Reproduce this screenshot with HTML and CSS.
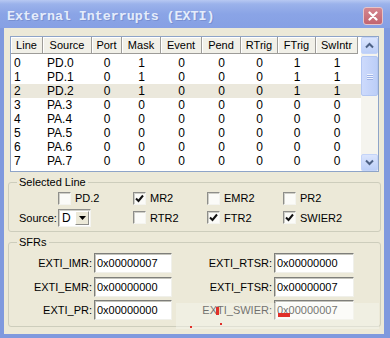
FILE: index.html
```html
<!DOCTYPE html>
<html lang="en">
<head>
    <meta charset="UTF-8">
    <title>External Interrupts (EXTI)</title>
    <link rel="stylesheet" href="styles.css">
</head>
<body>
    <div class="window">
        <div class="titlebar">
            <span class="title">External Interrupts (EXTI)</span>
            <span class="close">
                <svg width="10" height="10" viewBox="0 0 10 10"><path d="M1.5 1.5 L8.5 8.5 M8.5 1.5 L1.5 8.5" stroke="#fff" stroke-width="2.2" stroke-linecap="round"/></svg>
            </span>
        </div>
        <div class="body">
            <div class="listview">
                <div class="lv-main">
                    <div class="lv-head lv-grid">
                        <span>Line</span><span>Source</span><span>Port</span><span>Mask</span><span>Event</span><span>Pend</span><span>RTrig</span><span>FTrig</span><span>SwIntr</span>
                    </div>
                    <div class="lv-rows">
                        <div class="lv-row lv-grid"><span>0</span><span>PD.0</span><span>0</span><span>1</span><span>0</span><span>0</span><span>0</span><span>1</span><span>1</span></div>
                        <div class="lv-row lv-grid"><span>1</span><span>PD.1</span><span>0</span><span>1</span><span>0</span><span>0</span><span>0</span><span>1</span><span>1</span></div>
                        <div class="lv-row lv-grid sel"><span>2</span><span>PD.2</span><span>0</span><span>1</span><span>0</span><span>0</span><span>0</span><span>1</span><span>1</span></div>
                        <div class="lv-row lv-grid"><span>3</span><span>PA.3</span><span>0</span><span>0</span><span>0</span><span>0</span><span>0</span><span>0</span><span>0</span></div>
                        <div class="lv-row lv-grid"><span>4</span><span>PA.4</span><span>0</span><span>0</span><span>0</span><span>0</span><span>0</span><span>0</span><span>0</span></div>
                        <div class="lv-row lv-grid"><span>5</span><span>PA.5</span><span>0</span><span>0</span><span>0</span><span>0</span><span>0</span><span>0</span><span>0</span></div>
                        <div class="lv-row lv-grid"><span>6</span><span>PA.6</span><span>0</span><span>0</span><span>0</span><span>0</span><span>0</span><span>0</span><span>0</span></div>
                        <div class="lv-row lv-grid"><span>7</span><span>PA.7</span><span>0</span><span>0</span><span>0</span><span>0</span><span>0</span><span>0</span><span>0</span></div>
                    </div>
                </div>
                <div class="vscroll">
                    <div class="sb-btn">
                        <svg width="9" height="7" viewBox="0 0 9 7"><path d="M1 5.5 L4.5 2 L8 5.5" fill="none" stroke="#4d6185" stroke-width="2"/></svg>
                    </div>
                    <div class="sb-track">
                        <div class="sb-thumb"><i class="grip"></i><i class="grip"></i><i class="grip"></i></div>
                    </div>
                    <div class="sb-btn">
                        <svg width="9" height="7" viewBox="0 0 9 7"><path d="M1 1.5 L4.5 5 L8 1.5" fill="none" stroke="#4d6185" stroke-width="2"/></svg>
                    </div>
                </div>
            </div>

            <fieldset class="group">
                <legend>Selected Line</legend>
                <div class="sel-grid">
                    <span></span>
                    <span class="chk"><i class="box"></i>PD.2</span>
                    <span class="chk"><i class="box on"><svg width="9" height="9" viewBox="0 0 9 9"><path d="M1 4.5 L3.5 7 L8 1.5" fill="none" stroke="#111" stroke-width="2"/></svg></i>MR2</span>
                    <span class="chk"><i class="box"></i>EMR2</span>
                    <span class="chk"><i class="box"></i>PR2</span>

                    <span>Source:</span>
                    <span class="combo"><span class="combo-val">D</span><span class="combo-btn"><svg width="7" height="4" viewBox="0 0 7 4"><polygon points="0,0 7,0 3.5,4" fill="#000"/></svg></span></span>
                    <span class="chk"><i class="box"></i>RTR2</span>
                    <span class="chk"><i class="box on"><svg width="9" height="9" viewBox="0 0 9 9"><path d="M1 4.5 L3.5 7 L8 1.5" fill="none" stroke="#111" stroke-width="2"/></svg></i>FTR2</span>
                    <span class="chk"><i class="box on"><svg width="9" height="9" viewBox="0 0 9 9"><path d="M1 4.5 L3.5 7 L8 1.5" fill="none" stroke="#111" stroke-width="2"/></svg></i>SWIER2</span>
                </div>
            </fieldset>

            <fieldset class="group sfrs">
                <legend>SFRs</legend>
                <div class="sfr-grid">
                    <label>EXTI_IMR:</label><span class="field">0x00000007</span>
                    <label>EXTI_RTSR:</label><span class="field">0x00000000</span>
                    <label>EXTI_EMR:</label><span class="field">0x00000000</span>
                    <label>EXTI_FTSR:</label><span class="field">0x00000007</span>
                    <label>EXTI_PR:</label><span class="field">0x00000000</span>
                    <label>EXTI_SWIER:</label><span class="field">0x00000007</span>
                </div>
            </fieldset>
        </div>
        <div class="watermark">
            <i class="mark m1"></i><i class="mark m2"></i><i class="mark m3"></i><i class="mark m4"></i>
        </div>
    </div>
</body>
</html>
```

FILE: styles.css
```css
* {
    box-sizing: border-box;
}
body {
    margin: 0;
    font-family: "Liberation Sans", Arial, sans-serif;
    font-size: 11px;
    color: #000;
    background: #8aa4e6;
}
.window {
    position: relative;
    width: 390px;
    height: 338px;
    display: flex;
    flex-direction: column;
}
.titlebar {
    height: 28px;
    flex: none;
    display: flex;
    align-items: center;
    justify-content: space-between;
    padding: 4px 7px 0 7px;
    background: linear-gradient(#b7c8f2 0, #9bb2eb 4px, #8aa4e6 14px, #86a0e4 100%);
}
.title {
    font-family: "Liberation Mono", "DejaVu Sans Mono", monospace;
    font-weight: bold;
    font-size: 13.3px;
    color: #e4ecfb;
    text-shadow: 1px 1px 0 #7890d2;
}
.close {
    width: 20px;
    height: 18px;
    margin-top: -1px;
    display: flex;
    align-items: center;
    justify-content: center;
    background: linear-gradient(#d4868f, #c26570);
    border: 1px solid #e6c4c8;
    border-radius: 3px;
}
.body {
    flex: 1;
    background: #ece9d8;
    border-style: solid;
    border-color: #7f99de;
    border-width: 0 6px 4px 4px;
    padding: 8px 5px 0 6px;
}

/* list view */
.listview {
    height: 136px;
    display: flex;
    border: 1px solid #8ea4c8;
    background: #fff;
}
.lv-main {
    width: 350px;
}
.lv-grid {
    display: grid;
    grid-template-columns: 32px 49px 30px 39px 41px 39px 37px 38px 42px;
}
.lv-head span {
    height: 17px;
    line-height: 16px;
    text-align: center;
    background: #f1f0e8;
    border-right: 1px solid #9d9c98;
    border-bottom: 1px solid #9d9c98;
    box-shadow: inset 1px 1px 0 #fff;
}
.lv-rows {
    padding-top: 2px;
}
.lv-row {
    height: 14px;
    line-height: 14px;
    font-size: 12px;
}
.lv-row span {
    text-align: center;
}
.lv-row span:nth-child(1) {
    text-align: left;
    padding-left: 3px;
}
.lv-row span:nth-child(2) {
    text-align: left;
    padding-left: 4px;
}
.lv-row.sel {
    background: #ebe8dc;
}
.vscroll {
    width: 17px;
    display: flex;
    flex-direction: column;
    background: #f5f4ee;
}
.sb-btn {
    height: 17px;
    display: flex;
    align-items: center;
    justify-content: center;
    background: linear-gradient(#dbe5fd, #bccff8);
    border: 1px solid #c4d4f8;
    border-radius: 2px;
}
.sb-track {
    flex: 1;
    padding-top: 2px;
}
.sb-thumb {
    height: 40px;
    display: flex;
    flex-direction: column;
    align-items: center;
    justify-content: center;
    gap: 1px;
    background: linear-gradient(90deg, #cddafc, #bccef7);
    border: 1px solid #b2c6f2;
    border-radius: 2px;
}
.grip {
    width: 6px;
    height: 1px;
    background: #eef3fe;
    box-shadow: 0 1px 0 #9db2e6;
}

/* group boxes */
.group {
    margin: 4px -2px 0;
    padding: 0 8px 3px;
    border: 1px solid #cdcdbc;
    border-radius: 3px;
    min-width: 0;
}
.group legend {
    padding: 0 2px;
    line-height: 13px;
}
.sfrs {
    padding-bottom: 6px;
}
.sel-grid {
    display: grid;
    grid-template-columns: 39px 75px 74px 76px auto;
    grid-template-rows: 18px 21px;
    align-items: center;
    padding-left: 2px;
}
.chk {
    display: flex;
    align-items: center;
    gap: 4px;
}
.box {
    width: 13px;
    height: 13px;
    display: flex;
    align-items: center;
    justify-content: center;
    background: #fbfbf8;
    border: 1px solid;
    border-color: #8e8e8a #f4f4f0 #f4f4f0 #8e8e8a;
    box-shadow: inset 1px 1px 0 #cfcfc8;
}
.combo {
    width: 33px;
    height: 18px;
    display: flex;
    background: #fff;
    border: 1px solid;
    border-color: #8e8e8a #f4f4f0 #f4f4f0 #8e8e8a;
    box-shadow: inset 1px 1px 0 #cfcfc8;
}
.combo-val {
    flex: 1;
    padding-left: 3px;
    line-height: 16px;
    font-size: 12px;
}
.combo-btn {
    width: 14px;
    margin: 1px 1px 1px 0;
    display: flex;
    align-items: center;
    justify-content: center;
    background: #ece9d8;
    border: 1px solid;
    border-color: #fff #8e8e8a #8e8e8a #fff;
}
.sfr-grid {
    display: grid;
    grid-template-columns: 75px 78px 98px 80px;
    grid-auto-rows: 20px;
    column-gap: 2px;
    row-gap: 3.5px;
    align-items: center;
    padding-top: 4px;
}
.sfr-grid label {
    text-align: right;
}
.field {
    height: 20px;
    line-height: 18px;
    padding-left: 2px;
    background: #fff;
    border: 1px solid;
    border-color: #7e7e7a #f0f0ea #f0f0ea #7e7e7a;
    box-shadow: inset 1px 1px 0 #c4c4bc;
}

/* faint overlay box in the bottom right corner */
.watermark {
    position: absolute;
    left: 176px;
    top: 303px;
    width: 203px;
    height: 26px;
    background: rgba(247, 246, 240, 0.45);
}
.mark {
    position: absolute;
    background: #e0302a;
}
.m1 { left: 40px; top: 4px; width: 3px; height: 8px; }
.m2 { left: 102px; top: 10px; width: 12px; height: 4px; }
.m3 { left: 14px; top: 23px; width: 2px; height: 2px; }
.m4 { left: 44px; top: 20px; width: 2px; height: 2px; }
```
